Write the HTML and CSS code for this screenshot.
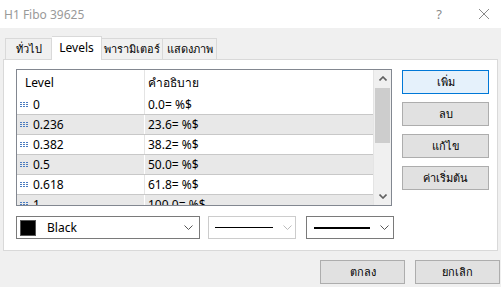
FILE: index.html
```html
<!DOCTYPE html>
<html lang="th">
<head>
  <meta charset="UTF-8">
  <title>H1 Fibo 39625</title>
  <link rel="stylesheet" href="styles.css">
</head>
<body>

  <div class="titlebar">
    <span class="title">H1 Fibo 39625</span>
    <span class="help">?</span>
    <svg class="close" width="12" height="12" viewBox="0 0 12 12">
      <path d="M1 1 L11 11 M11 1 L1 11" stroke="#8a8a8a" stroke-width="1" fill="none"/>
    </svg>
  </div>

  <!-- Tabs -->
  <div class="tabs">
    <div class="tab first">ทั่วไป</div>
    <div class="tab active">Levels</div>
    <div class="tab params">พารามิเตอร์</div>
    <div class="tab view">แสดงภาพ</div>
  </div>

  <div class="panel">
    <div class="top-row">
      <div class="list">
        <div class="list-body">
          <div class="row header">
            <div class="c1 head-level">Level</div>
            <div class="c2">คำอธิบาย</div>
          </div>
          <div class="row first-row">
            <div class="c1"><svg class="dots" width="9" height="5" viewBox="0 0 9 5"><path d="M0 0.5 H9 M0 2.5 H9 M0 4.5 H9" stroke="#4a7cc0" stroke-width="1" stroke-dasharray="2 1" fill="none"/></svg>0</div>
            <div class="c2">0.0= %$</div>
          </div>
          <div class="row alt">
            <div class="c1"><svg class="dots" width="9" height="5" viewBox="0 0 9 5"><path d="M0 0.5 H9 M0 2.5 H9 M0 4.5 H9" stroke="#4a7cc0" stroke-width="1" stroke-dasharray="2 1" fill="none"/></svg>0.236</div>
            <div class="c2">23.6= %$</div>
          </div>
          <div class="row">
            <div class="c1"><svg class="dots" width="9" height="5" viewBox="0 0 9 5"><path d="M0 0.5 H9 M0 2.5 H9 M0 4.5 H9" stroke="#4a7cc0" stroke-width="1" stroke-dasharray="2 1" fill="none"/></svg>0.382</div>
            <div class="c2">38.2= %$</div>
          </div>
          <div class="row alt">
            <div class="c1"><svg class="dots" width="9" height="5" viewBox="0 0 9 5"><path d="M0 0.5 H9 M0 2.5 H9 M0 4.5 H9" stroke="#4a7cc0" stroke-width="1" stroke-dasharray="2 1" fill="none"/></svg>0.5</div>
            <div class="c2">50.0= %$</div>
          </div>
          <div class="row">
            <div class="c1"><svg class="dots" width="9" height="5" viewBox="0 0 9 5"><path d="M0 0.5 H9 M0 2.5 H9 M0 4.5 H9" stroke="#4a7cc0" stroke-width="1" stroke-dasharray="2 1" fill="none"/></svg>0.618</div>
            <div class="c2">61.8= %$</div>
          </div>
          <div class="row alt">
            <div class="c1"><svg class="dots" width="9" height="5" viewBox="0 0 9 5"><path d="M0 0.5 H9 M0 2.5 H9 M0 4.5 H9" stroke="#4a7cc0" stroke-width="1" stroke-dasharray="2 1" fill="none"/></svg>1</div>
            <div class="c2">100.0= %$</div>
          </div>
        </div>
        <div class="scrollbar">
          <div class="arrow">
            <svg width="8" height="5" viewBox="0 0 8 5"><path d="M0.5 4.5 L4 1 L7.5 4.5" stroke="#606060" stroke-width="1.6" fill="none"/></svg>
          </div>
          <div class="thumb"></div>
          <div class="track"></div>
          <div class="arrow">
            <svg width="8" height="5" viewBox="0 0 8 5"><path d="M0.5 0.5 L4 4 L7.5 0.5" stroke="#606060" stroke-width="1.6" fill="none"/></svg>
          </div>
        </div>
      </div>

      <div class="side-buttons">
        <div class="btn default">เพิ่ม</div>
        <div class="btn">ลบ</div>
        <div class="btn">แก้ไข</div>
        <div class="btn">ค่าเริ่มต้น</div>
      </div>
    </div>

    <div class="combos">
      <div class="combo color-combo">
        <span class="swatch"></span>
        <span class="combo-text">Black</span>
        <svg class="chev" width="9" height="5" viewBox="0 0 9 5"><path d="M0.5 0.5 L4.5 4.5 L8.5 0.5" stroke="#555" stroke-width="1" fill="none"/></svg>
      </div>
      <div class="combo style-combo disabled">
        <span class="line thin"></span>
        <svg class="chev" width="9" height="5" viewBox="0 0 9 5"><path d="M0.5 0.5 L4.5 4.5 L8.5 0.5" stroke="#bbb" stroke-width="1" fill="none"/></svg>
      </div>
      <div class="combo width-combo">
        <span class="line thick"></span>
        <svg class="chev" width="9" height="5" viewBox="0 0 9 5"><path d="M0.5 0.5 L4.5 4.5 L8.5 0.5" stroke="#555" stroke-width="1" fill="none"/></svg>
      </div>
    </div>
  </div>

  <div class="footer">
    <div class="btn">ตกลง</div>
    <div class="btn">ยกเลิก</div>
  </div>

</body>
</html>
```

FILE: styles.css
```css
html, body {
  margin: 0;
  padding: 0;
  width: 501px;
  height: 287px;
  overflow: hidden;
  background: #f0f0f0;
  font-family: 'Noto Sans', 'DejaVu Sans', sans-serif;
  font-size: 12px;
  color: #000;
}

/* Title */
.titlebar {
  height: 28px;
  background: #fff;
  display: flex;
  align-items: center;
  padding-left: 4px;
}

.title {
  color: #999;
  flex: 1;
}

.help {
  color: #8a8a8a;
  font-size: 13px;
  margin-right: 36px;
}

.close {
  margin-right: 11px;
}

/* Tabs */
.tabs {
  display: flex;
  align-items: flex-end;
  margin-top: 8px;
  padding-left: 5px;
  height: 23px;
  position: relative;
  z-index: 2;
}

.tab {
  box-sizing: border-box;
  height: 21px;
  line-height: 19px;
  text-align: center;
  border: 1px solid #d9d9d9;
  border-bottom: none;
  border-left: none;
  background: #f0f0f0;
  white-space: nowrap;
  font-size: 11px;
}

.tab.first {
  border-left: 1px solid #d9d9d9;
  width: 47px;
}

.tab.active {
  height: 24px;
  line-height: 21px;
  background: #fff;
  width: 50px;
  margin-bottom: -1px;
  font-size: 12px;
}

.tab.params { width: 61px; }
.tab.view { width: 54px; }

/* Panel */
.panel {
  margin: 0 3px;
  background: #fff;
  border: 1px solid #d9d9d9;
  padding: 9px 0 0 12px;
  position: relative;
  z-index: 1;
  height: 181px;
}

.top-row {
  display: flex;
  gap: 10px;
}

.list {
  width: 374px;
  height: 135px;
  border: 1px solid #828790;
  display: flex;
  overflow: hidden;
}

.list-body {
  flex: 1;
  overflow: hidden;
  border-right: 1px solid #e4e4e4;
}

.row {
  display: flex;
  height: 20px;
  align-items: center;
  border-top: 1px solid #c8c8c8;
  box-sizing: border-box;
}

.row.header {
  height: 24px;
  border-top: none;
}

.row.first-row {
  border-top: none;
}

.row.alt {
  background: #e8e8e8;
}

.c1 {
  width: 124px;
  padding-left: 3px;
  display: flex;
  align-items: center;
  height: 100%;
  border-right: 1px solid #e4e4e4;
}

.head-level {
  padding-left: 8px;
  width: 119px;
}

.row.alt .c1 {
  border-right-color: #fff;
}

.c2 {
  padding-left: 3px;
}

.dots {
  margin-right: 4px;
}

/* Scrollbar */
.scrollbar {
  width: 17px;
  background: #f0f0f0;
  display: flex;
  flex-direction: column;
}

.arrow {
  height: 17px;
  display: flex;
  align-items: center;
  justify-content: center;
}

.thumb {
  height: 55px;
  margin: 1px 1px 0 1px;
  background: #cdcdcd;
}

.track {
  flex: 1;
}

/* Buttons */
.side-buttons {
  display: flex;
  flex-direction: column;
  gap: 8px;
  margin-top: 1px;
}

.btn {
  width: 85px;
  height: 22px;
  line-height: 21px;
  text-align: center;
  background: #e1e1e1;
  border: 1px solid #adadad;
  font-size: 11px;
}

.btn.default {
  background: #e5f1fb;
  border-color: #0078d7;
}

/* Combos */
.combos {
  display: flex;
  margin-top: 10px;
}

.combo {
  height: 21px;
  border: 1px solid #7a7a7a;
  display: flex;
  align-items: center;
}

.color-combo {
  width: 182px;
  margin-right: 8px;
}

.swatch {
  width: 14px;
  height: 14px;
  background: #000;
  border: 1px solid #555;
  margin-left: 3px;
}

.combo-text {
  margin-left: 11px;
  flex: 1;
}

.color-combo .chev {
  margin-right: 6px;
}

.style-combo {
  width: 86px;
  margin-right: 10px;
}

.width-combo {
  width: 86px;
}

.disabled {
  border-color: #cccccc;
}

.line {
  display: block;
  background: #000;
  margin-left: 6px;
  margin-right: 10px;
}

.line.thin {
  width: 58px;
  height: 1px;
}

.line.thick {
  width: 56px;
  height: 2px;
  margin-left: 7px;
}

/* Footer */
.footer {
  display: flex;
  justify-content: flex-end;
  gap: 10px;
  margin-top: 9px;
  padding-right: 1px;
}

.footer .btn {
  width: 83px;
}
```
